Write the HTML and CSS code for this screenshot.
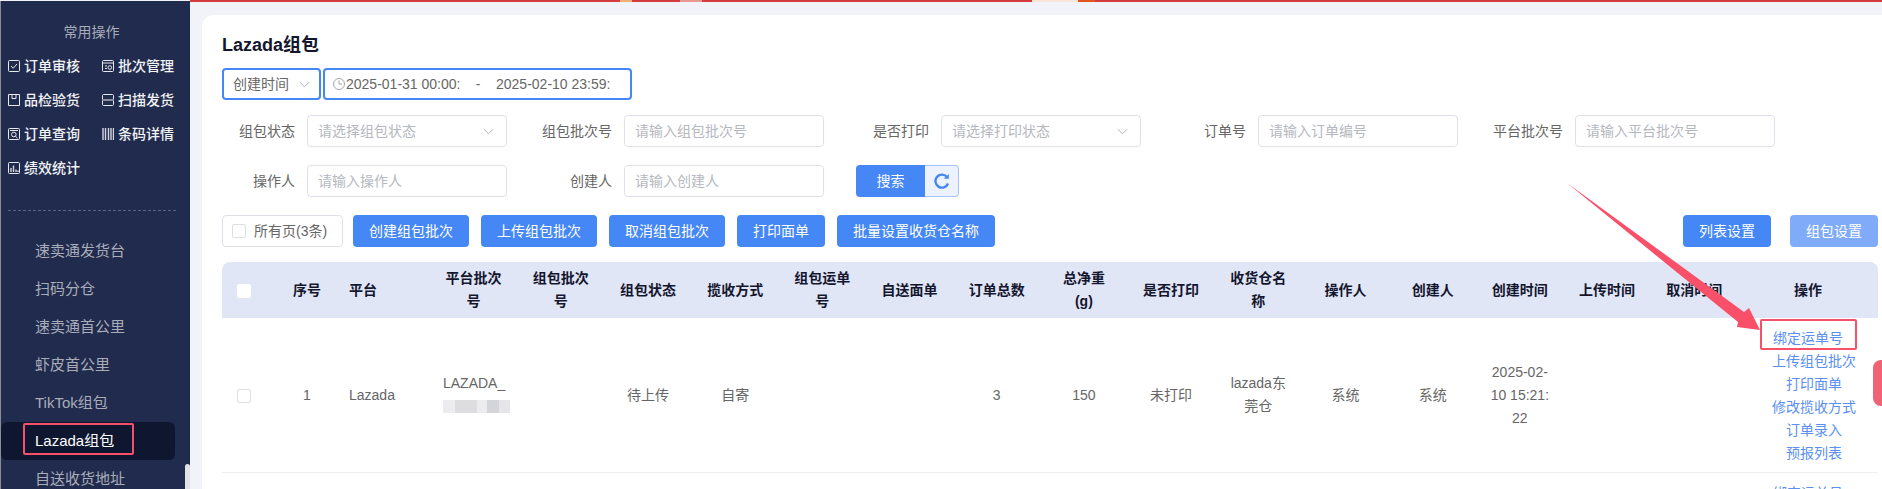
FILE: index.html
```html
<!DOCTYPE html>
<html lang="zh-CN">
<head>
<meta charset="utf-8">
<title>Lazada组包</title>
<link rel="stylesheet" href="styles.css">
</head>
<body>
<div class="stage">
  <aside class="sidebar">
    <div class="quick-title">常用操作</div>
    <div class="quick-grid">
      <a class="quick-item"><svg class="qi" viewBox="0 0 12 12"><rect x=".5" y=".5" width="11" height="11" rx="1"/><path d="M3 6l2.2 2.2L9 4"/></svg>订单审核</a>
      <a class="quick-item"><svg class="qi" viewBox="0 0 12 12"><rect x=".5" y=".5" width="11" height="11" rx="1"/><path d="M.5 3h11M3 6h2M3 8.500h2"/><circle cx="7.800" cy="7.500" r="1.800"/></svg>批次管理</a>
      <a class="quick-item"><svg class="qi" viewBox="0 0 12 12"><path d="M.5.500h11v11H.5zM4 .500v4h4v-4"/></svg>品检验货</a>
      <a class="quick-item"><svg class="qi" viewBox="0 0 12 12"><rect x=".5" y=".5" width="11" height="11" rx="1"/><path class="qi-band" d="M0 6h12"/></svg>扫描发货</a>
      <a class="quick-item"><svg class="qi" viewBox="0 0 12 12"><rect x=".5" y=".5" width="11" height="11" rx="1"/><path d="M2 2.500h8M7.500 8.500l2 1.500"/><circle cx="5.800" cy="6.500" r="2.300"/></svg>订单查询</a>
      <a class="quick-item"><svg class="qi" viewBox="0 0 12 12"><path class="qi-bars" d="M1 0v12M3.500 0v12M6.500 0v12M9 0v12M11.500 0v12"/></svg>条码详情</a>
      <a class="quick-item"><svg class="qi" viewBox="0 0 12 12"><rect x=".5" y=".5" width="11" height="11" rx="1"/><path class="qi-bars" d="M3 10V6M5.500 10V3.500M8 10V7.500M10 10V8.500"/></svg>绩效统计</a>
    </div>
    <div class="side-divider"></div>
    <nav class="menu">
      <a class="menu-item">速卖通发货台</a>
      <a class="menu-item">扫码分仓</a>
      <a class="menu-item">速卖通首公里</a>
      <a class="menu-item">虾皮首公里</a>
      <a class="menu-item">TikTok组包</a>
      <a class="menu-item is-active">Lazada组包</a>
      <a class="menu-item">自送收货地址</a>
    </nav>
    <div class="side-scroll"></div>
  </aside>

  <main class="main">
    <section class="card">
      <h1 class="title">Lazada组包</h1>

      <div class="date-row">
        <div class="date-type">创建时间<svg class="chev" viewBox="0 0 12 7"><path d="M1 1l5 5 5-5"/></svg></div>
        <div class="date-range">
          <svg class="clock" viewBox="0 0 12 12"><circle cx="6" cy="6" r="5.500"/><path d="M6 2.500V6h3"/></svg>
          <span class="date-val">2025-01-31 00:00:</span>
          <span class="date-sep">-</span>
          <span class="date-val">2025-02-10 23:59:</span>
        </div>
      </div>

      <div class="filters">
        <div class="field"><label class="field-label">组包状态</label><div class="control">请选择组包状态<svg class="chev chev-end" viewBox="0 0 12 7"><path d="M1 1l5 5 5-5"/></svg></div></div>
        <div class="field"><label class="field-label">组包批次号</label><div class="control">请输入组包批次号</div></div>
        <div class="field"><label class="field-label">是否打印</label><div class="control">请选择打印状态<svg class="chev chev-end" viewBox="0 0 12 7"><path d="M1 1l5 5 5-5"/></svg></div></div>
        <div class="field"><label class="field-label">订单号</label><div class="control">请输入订单编号</div></div>
        <div class="field"><label class="field-label">平台批次号</label><div class="control">请输入平台批次号</div></div>
        <div class="field"><label class="field-label">操作人</label><div class="control">请输入操作人</div></div>
        <div class="field"><label class="field-label">创建人</label><div class="control">请输入创建人</div></div>
        <div class="search-group">
          <button class="search-btn">搜索</button>
          <button class="refresh-btn"><svg viewBox="0 0 16 16"><path d="M13.200 4.300A6.500 6.500 0 1 0 14 10.500"/><path class="refresh-tip" d="M9.800 5.800h5V1z"/></svg></button>
        </div>
      </div>

      <div class="toolbar">
        <div class="all-pages"><span class="check"></span>所有页(3条)</div>
        <button class="btn">创建组包批次</button>
        <button class="btn">上传组包批次</button>
        <button class="btn">取消组包批次</button>
        <button class="btn">打印面单</button>
        <button class="btn">批量设置收货仓名称</button>
        <div class="toolbar-end">
          <button class="btn">列表设置</button>
          <button class="btn btn-light">组包设置</button>
        </div>
      </div>

      <table class="grid">
        <colgroup>
          <col class="c-check"><col class="c-no"><col class="c-platform">
          <col class="c-std"><col class="c-std"><col class="c-std"><col class="c-std"><col class="c-std">
          <col class="c-std"><col class="c-std"><col class="c-std"><col class="c-std"><col class="c-std">
          <col class="c-std"><col class="c-std"><col class="c-std"><col class="c-std"><col class="c-std">
          <col class="c-ops">
        </colgroup>
        <thead>
          <tr>
            <th><span class="check check-head"></span></th>
            <th>序号</th><th class="left">平台</th><th>平台批次号</th><th>组包批次号</th><th>组包状态</th><th>揽收方式</th><th>组包运单号</th><th>自送面单</th><th>订单总数</th><th>总净重<br>(g)</th><th>是否打印</th><th>收货仓名称</th><th>操作人</th><th>创建人</th><th>创建时间</th><th>上传时间</th><th>取消时间</th><th>操作</th>
          </tr>
        </thead>
        <tbody>
          <tr>
            <td><span class="check"></span></td>
            <td>1</td><td class="left">Lazada</td>
            <td class="left batch">LAZADA_<span class="blur"></span></td>
            <td></td><td>待上传</td><td>自寄</td><td></td><td></td><td>3</td><td>150</td><td>未打印</td><td>lazada东莞仓</td><td>系统</td><td>系统</td><td>2025-02-10 15:21:22</td><td></td><td></td>
            <td class="ops">
              <a class="op op-first">绑定运单号</a>
              <a class="op">上传组包批次</a>
              <a class="op">打印面单</a>
              <a class="op">修改揽收方式</a>
              <a class="op">订单录入</a>
              <a class="op">预报列表</a>
            </td>
          </tr>
          <tr>
            <td colspan="18"></td>
            <td class="ops ops-top"><a class="op op-first">绑定运单号</a></td>
          </tr>
        </tbody>
      </table>
    </section>
  </main>

  <div class="side-tab"></div>
  <div class="mark mark-menu"></div>
  <div class="mark mark-op"></div>
  <svg class="arrow" viewBox="0 0 1882 489"><polygon points="1567,183 1744,312 1749,308 1760,330 1737,327 1738,322"/></svg>
</div>
</body>
</html>
```
FILE: styles.css
```css
* { box-sizing: border-box; }
html, body { margin: 0; height: 489px; overflow: hidden; background: #f2f3f8; }
body { font: 14px/23px "Liberation Sans", "Noto Sans CJK SC", sans-serif; color: #666; }
button { font: inherit; border: 0; padding: 0; }

.stage { position: relative; display: flex; width: 1882px; height: 489px; overflow: hidden; }

/* sidebar */
.sidebar {
  position: relative; flex: 0 0 190px; margin-top: 1px; height: 488px;
  border-left: 1px solid #8a8d96; background: #212b4d; overflow: hidden;
  padding-top: 20px;
}
.quick-title { width: 181px; text-align: center; line-height: 22px; color: #a8adbb; }
.quick-grid { display: grid; grid-template-columns: 94px 80px; grid-auto-rows: 34px; margin-top: 6px; padding-left: 7px; }
.quick-item { display: flex; align-items: center; gap: 4px; color: #f2f3f6; font-weight: 500; white-space: nowrap; }
.qi { width: 12px; height: 12px; flex: none; fill: none; stroke: #e8e9ee; stroke-width: 1; }
.qi-band { stroke-width: 2; stroke: #8a8fa2; }
.qi-bars { stroke-width: 1.4; stroke: #d5d7df; }
.side-divider { margin: 25px 0 0 7px; width: 168px; border-top: 1px dashed #596280; }
.menu { margin-top: 21px; }
.menu-item { display: block; width: 174px; height: 38px; padding-left: 34px; font-size: 15px; line-height: 38px; color: #a9adba; border-radius: 6px; }
.menu-item.is-active { background: #0f1730; color: #fff; }
.side-scroll { position: absolute; right: 0; top: 463px; width: 5px; height: 30px; background: #e2e2ea; border-radius: 3px 3px 0 0; }

/* main */
.main {
  flex: 1; padding: 13px 0 0 12px;
  border-top: 2px solid #d43c3f;
  border-image: linear-gradient(to right, #d43c3f 430px, #f3b070 430px, #f3b070 442px, #d43c3f 442px, #d43c3f 490px, #e89a90 490px, #e89a90 512px, #d43c3f 512px, #d43c3f 842px, #f8e6d8 842px, #f8e6d8 888px, #e2541e 888px, #e2541e 905px, #d43c3f 905px) 1;
  border-left: 0; border-right: 0; border-bottom: 0;
}
.card { height: 480px; padding: 20px 4px 0 20px; background: #fff; border-radius: 12px 0 0 0; }
.title { margin: 0; font-size: 18px; line-height: 20px; font-weight: 700; color: #14162e; }

.date-row { display: flex; gap: 2px; margin-top: 13px; height: 32px; }
.date-type, .date-range { display: flex; align-items: center; border: 2px solid #4587f5; border-radius: 4px; background: #fff; }
.date-type { width: 99px; padding-left: 9px; color: #666; white-space: nowrap; }
.date-type .chev { margin-left: 10px; }
.date-range { width: 309px; padding-left: 8px; color: #666; }
.clock { width: 12px; height: 12px; margin-right: 1px; flex: none; fill: none; stroke: #a4a7b0; stroke-width: 1; }
.date-val { width: 114px; white-space: nowrap; }
.date-sep { width: 36px; text-align: center; }
.chev { width: 11px; height: 7px; flex: none; fill: none; stroke: #a6a9b3; stroke-width: 1; }
.chev-end { position: absolute; right: 12px; top: 12px; }

.filters { display: grid; grid-template-columns: repeat(5, 285px); column-gap: 32px; row-gap: 18px; margin-top: 15px; }
.field { display: flex; align-items: center; gap: 12px; height: 32px; }
.field-label { width: 73px; flex: none; text-align: right; color: #666; white-space: nowrap; }
.control { position: relative; width: 200px; height: 32px; padding-left: 10px; line-height: 31px; color: #b5b8c0; border: 1px solid #dfe1ea; border-radius: 4px; }

.search-group { display: flex; height: 32px; }
.search-btn { width: 69px; color: #fff; background: #4587f5; border-radius: 4px 0 0 4px; }
.refresh-btn { display: flex; align-items: center; justify-content: center; width: 34px; background: #ecf3fe; border: 1px solid #a5c5fa; border-left: 0; border-radius: 0 4px 4px 0; }
.refresh-btn svg { width: 16px; height: 16px; fill: none; stroke: #4587f5; stroke-width: 2.4; }
.refresh-tip { fill: #4587f5; stroke: none; }

.toolbar { display: flex; gap: 12px; margin-top: 18px; height: 32px; }
.all-pages { display: flex; align-items: center; gap: 8px; width: 121px; margin-right: -2px; padding-left: 9px; color: #666; border: 1px solid #dfe1ea; border-radius: 4px; white-space: nowrap; }
.check { display: inline-block; width: 14px; height: 14px; background: #fff; border: 1px solid #dcdfe6; border-radius: 2px; vertical-align: middle; }
.check-head { border-color: #fff; }
.btn { padding: 0 16px; color: #fff; background: #4587f5; border-radius: 4px; white-space: nowrap; }
.btn-light { background: #7fabf8; }
.toolbar-end { display: flex; gap: 19px; margin-left: auto; }

/* table */
.grid { width: 1656px; margin-top: 15px; border-collapse: separate; border-spacing: 0; table-layout: fixed; }
.c-check { width: 43px; }
.c-no { width: 84px; }
.c-platform { width: 81px; }
.c-std { width: 87.2px; }
.c-ops { width: 140px; }
.grid th { height: 56px; padding: 0 12.5px; font-weight: 700; text-align: center; color: #14162e; background: #e1e6f7; word-break: break-all; }
.grid th:first-child { padding: 0; border-radius: 8px 0 0 0; }
.grid th:last-child { border-radius: 0 8px 0 0; }
.grid td { padding: 0 12.5px; height: 155px; text-align: center; color: #666; border-bottom: 1px solid #eceef3; word-break: break-all; }
.grid td:first-child { padding: 0; }
.grid .left { padding-left: 0; text-align: left; }
.grid td.batch { padding: 0 0 0 13px; }
.blur {
  display: block; width: 67px; height: 13px; margin-top: 5px; margin-bottom: 5px;
  background: linear-gradient(to right, #ececee 0 12px, #dddde0 12px 34px, #ececee 34px 44px, #d4d5d9 44px 56px, #e6e6e9 56px);
}
.grid td.ops { padding: 1px 0 0; }
.grid td.ops-top { vertical-align: top; padding-top: 9px; }
.op { display: block; margin-left: 12px; line-height: 23px; color: #5b8ff0; white-space: nowrap; }
.op-first { margin-left: 0; }

/* overlays */
.side-tab { position: absolute; right: 0; top: 360px; width: 9px; height: 46px; background: #ee6375; border-radius: 8px 0 0 8px; }
.mark { position: absolute; border: 2px solid #f9506a; border-radius: 2px; }
.mark-menu { left: 23px; top: 423px; width: 111px; height: 32px; }
.mark-op { left: 1760px; top: 319px; width: 97px; height: 31px; }
.arrow { position: absolute; inset: 0; width: 1882px; height: 489px; fill: #f9506a; pointer-events: none; }
```
